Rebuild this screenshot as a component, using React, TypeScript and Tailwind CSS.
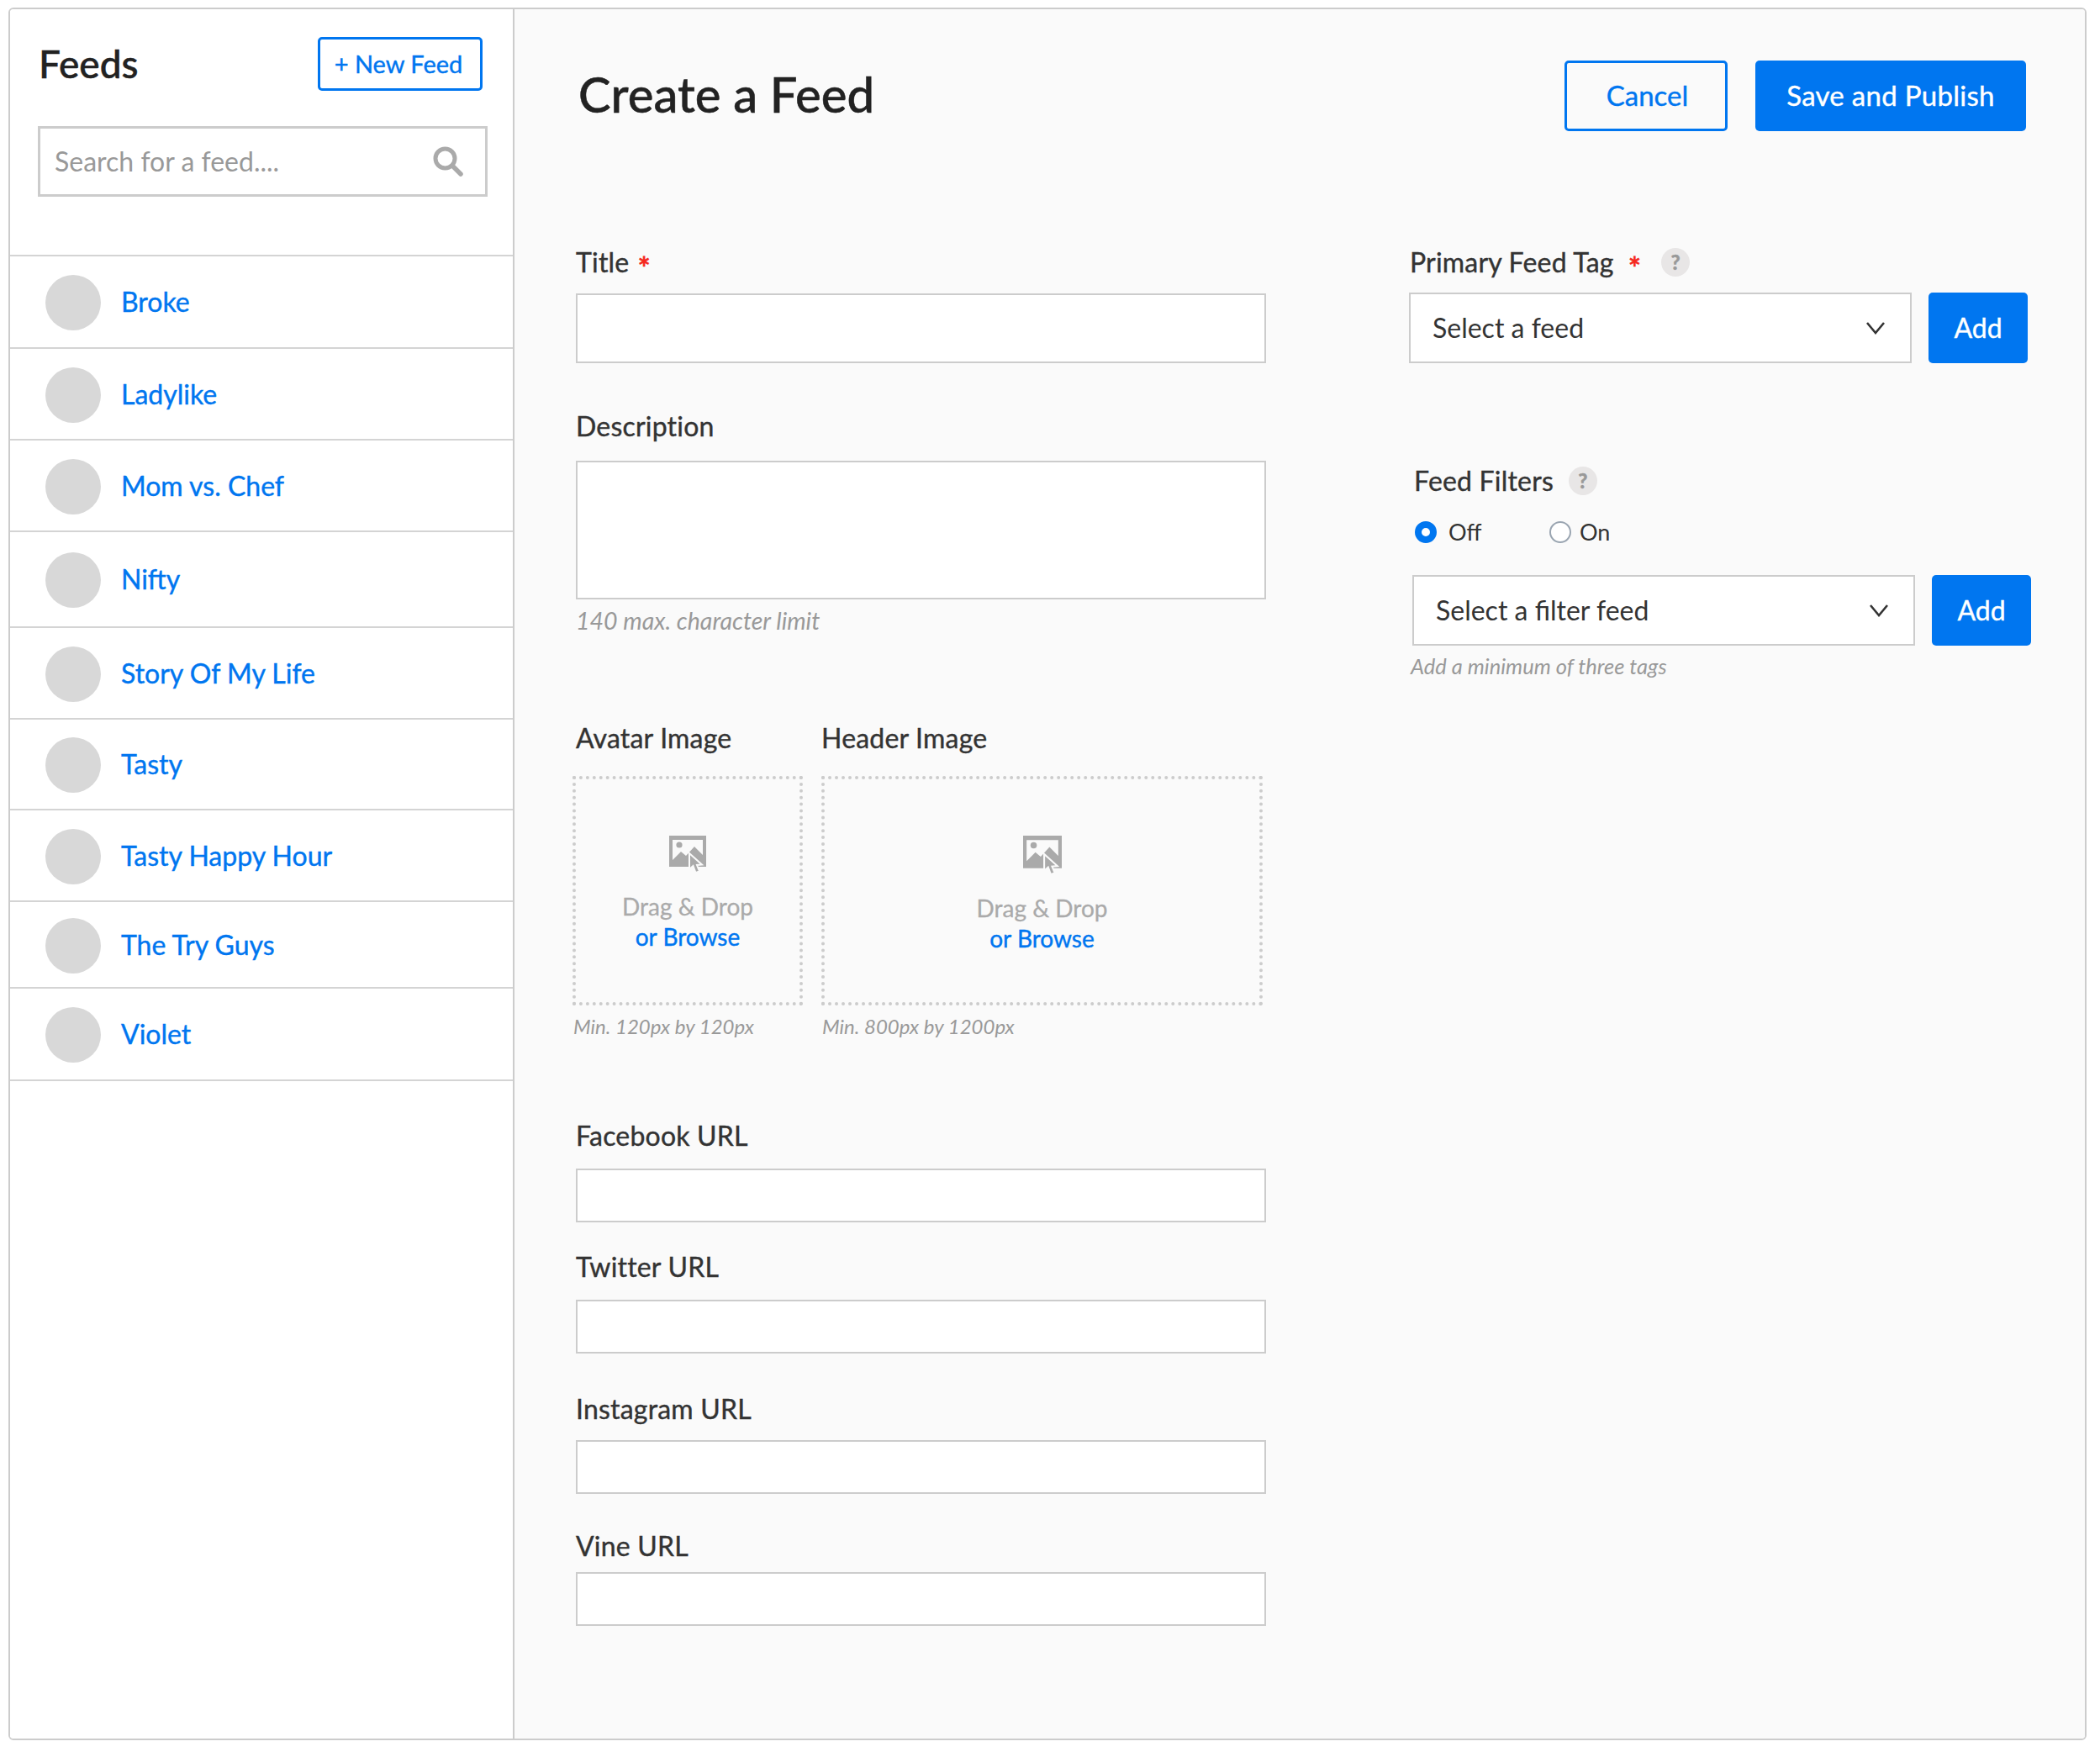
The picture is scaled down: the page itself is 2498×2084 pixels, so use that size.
import React from 'react';

const feeds = [
  { name: 'Broke', height: 'h-[110px]' },
  { name: 'Ladylike', height: 'h-[109px]' },
  { name: 'Mom vs. Chef', height: 'h-[109px]' },
  { name: 'Nifty', height: 'h-[114px]' },
  { name: 'Story Of My Life', height: 'h-[109px]' },
  { name: 'Tasty', height: 'h-[108px]' },
  { name: 'Tasty Happy Hour', height: 'h-[109px]' },
  { name: 'The Try Guys', height: 'h-[103px]' },
  { name: 'Violet', height: 'h-[110px]' },
];

function ImageIcon({ className }: { className: string }) {
  return (
    <svg viewBox="0 0 44 44" className={className}>
      <path fill="#aaa" fillRule="evenodd" d="M0 0h44v37H0zM4 5v24l10-10 6 5 10-11 10 10V5z" />
      <circle cx="12" cy="11" r="3.6" fill="#aaa" />
      <path fill="#aaa" stroke="#fafafa" strokeWidth="2" d="M24 21v19l4.500-4 3 8 4.500-1.500-3-7.500 6-.5z" />
    </svg>
  );
}

function Chevron() {
  return (
    <svg viewBox="0 0 22 15" className="h-[15px] w-[22px]" fill="none" stroke="#333" strokeWidth="2.6">
      <path d="M1 1l10 12L21 1" />
    </svg>
  );
}

function SearchIcon() {
  return (
    <svg viewBox="0 0 36 36" className="h-[36px] w-[36px]" fill="none" stroke="#aaa">
      <circle cx="14.5" cy="14.5" r="11.5" strokeWidth="5" />
      <path d="M23.5 23.5L33 33" strokeWidth="5.5" strokeLinecap="round" />
    </svg>
  );
}

function Help() {
  return (
    <span className="flex h-[34px] w-[34px] items-center justify-center rounded-full bg-[#e8e6e6] text-[24px] font-black text-[#999]">?</span>
  );
}

function Star({ className }: { className: string }) {
  return <span className={`h-[20px] text-[36px] font-bold leading-[32px] text-[#f5281e] ${className}`}>*</span>;
}

function Label({ children, className }: { children: React.ReactNode; className: string }) {
  return (
    <div className={`flex items-center text-[32px] leading-[40px] tracking-[0.2px] text-[#333] [-webkit-text-stroke:0.4px] ${className}`}>
      {children}
    </div>
  );
}

function Input({ className }: { className: string }) {
  return <div className={`w-[821px] border-2 border-[#ccc] bg-white ${className}`} />;
}

function DropZone({ width, iconClass, hint, gap }: { width: string; iconClass: string; hint: string; gap: string }) {
  return (
    <div className={gap}>
      <div className={`flex h-[273px] flex-col items-center border-4 border-dotted border-[#ccc] pt-[67px] ${width}`}>
        <ImageIcon className={iconClass} />
        <div className="mt-[22px] text-[28px] leading-[36px] text-[#aaa] [-webkit-text-stroke:0.3px]">Drag &amp; Drop</div>
        <div className="text-[28px] leading-[36px] text-[#0076f0] [-webkit-text-stroke:0.4px]">or Browse</div>
      </div>
      <div className="mt-[11px] pl-[1px] text-[24px] italic leading-[28px] text-[#999]">{hint}</div>
    </div>
  );
}

function SelectRow({ label, className }: { label: string; className: string }) {
  return (
    <div className={`flex gap-[20px] ${className}`}>
      <div className="flex h-[84px] w-[598px] items-center justify-between border-2 border-[#ccc] bg-white pl-[26px] pr-[30px] text-[32px] text-[#333]">
        {label}
        <Chevron />
      </div>
      <button className="h-[84px] w-[118px] rounded-[5px] bg-[#0076f0] text-[32px] text-white [-webkit-text-stroke:0.4px]">Add</button>
    </div>
  );
}

export default function App() {
  return (
    <div className="h-[2084px] w-[2498px] bg-white pl-[10px] pt-[9px] font-['Lato',sans-serif]">
      <div className="flex h-[2061px] w-[2472px] overflow-hidden rounded-[6px] border-2 border-[#ccc]">
        <aside className="w-[600px] shrink-0 border-r-2 border-[#ccc] bg-white">
          <div className="h-[294px] border-b-2 border-[#d4d4d4] pl-[33px] pr-[34px] pt-[33px]">
            <div className="flex items-center justify-between pl-[1px] pr-[2px]">
              <h1 className="text-[46px] font-medium leading-[64px] text-[#222] [-webkit-text-stroke:0.5px]">Feeds</h1>
              <button className="h-[64px] w-[196px] rounded-[5px] border-[3px] border-[#0076f0] pr-[4px] text-[29px] text-[#0076f0] [-webkit-text-stroke:0.4px]">+ New Feed</button>
            </div>
            <div className="mt-[42px] flex h-[84px] w-[535px] items-center justify-between border-[3px] border-[#ccc] pl-[17px] pr-[26px] text-[32px] text-[#999]">
              Search for a feed....
              <SearchIcon />
            </div>
          </div>
          {feeds.map((f) => (
            <div key={f.name} className={`flex items-center gap-[24px] border-b-2 border-[#d4d4d4] pl-[42px] ${f.height}`}>
              <div className="mt-[2px] h-[66px] w-[66px] rounded-full bg-[#d8d8d8]" />
              <a className="text-[32px] text-[#0076f0] [-webkit-text-stroke:0.4px]">{f.name}</a>
            </div>
          ))}
        </aside>

        <main className="min-w-0 flex-1 bg-[#fafafa] pl-[73px] pr-[70px]">
          <div className="flex items-start justify-between pt-[61px]">
            <h2 className="pl-[3px] pt-[8px] text-[58px] font-medium leading-[64px] text-[#222] [-webkit-text-stroke:0.5px]">Create a Feed</h2>
            <div className="flex gap-[33px]">
              <button className="h-[84px] w-[194px] rounded-[5px] border-[3px] border-[#0076f0] pl-[3px] text-[33px] text-[#0076f0] [-webkit-text-stroke:0.4px]">Cancel</button>
              <button className="h-[84px] w-[322px] rounded-[5px] bg-[#0076f0] text-[33px] tracking-[0.3px] text-white [-webkit-text-stroke:0.4px]">Save and Publish</button>
            </div>
          </div>

          <div className="flex">
            <div className="w-[992px] shrink-0 pt-[136px]">
              <Label className="">
                Title<Star className="ml-[10px]" />
              </Label>
              <Input className="mt-[17px] h-[83px]" />
              <Label className="mt-[55px]">Description</Label>
              <Input className="mt-[21px] h-[165px]" />
              <div className="mt-[9px] text-[28.5px] italic leading-[32px] text-[#999]">140 max. character limit</div>
              <div className="mt-[104px] flex">
                <Label className="w-[292px]">Avatar Image</Label>
                <Label className="">Header Image</Label>
              </div>
              <div className="mt-[25px] flex">
                <DropZone width="w-[274px]" iconClass="h-[44px] w-[44px]" hint="Min. 120px by 120px" gap="-ml-[4px]" />
                <DropZone width="w-[525px]" iconClass="h-[46px] w-[46px]" hint="Min. 800px by 1200px" gap="ml-[22px]" />
              </div>
              <Label className="mt-[96px]">Facebook URL</Label>
              <Input className="mt-[19px] h-[64px]" />
              <Label className="mt-[33px]">Twitter URL</Label>
              <Input className="mt-[19px] h-[64px]" />
              <Label className="mt-[46px]">Instagram URL</Label>
              <Input className="mt-[17px] h-[64px]" />
              <Label className="mt-[42px]">Vine URL</Label>
              <Input className="mt-[11px] h-[64px]" />
            </div>

            <div className="pt-[136px]">
              <Label className="">
                Primary Feed Tag<Star className="ml-[17px]" />
                <span className="ml-[24px]"><Help /></span>
              </Label>
              <SelectRow label="Select a feed" className="-ml-[1px] mt-[16px]" />
              <Label className="ml-[5px] mt-[120px]">
                Feed Filters<span className="ml-[18px]"><Help /></span>
              </Label>
              <div className="ml-[6px] mt-[27px] flex items-center text-[27px] leading-[28px] text-[#333]">
                <span className="h-[26px] w-[26px] rounded-full border-[8px] border-[#0076f0] bg-white" />
                <span className="ml-[14px] w-[120px]">Off</span>
                <span className="h-[26px] w-[26px] rounded-full border-2 border-[#9aa5b1] bg-white" />
                <span className="ml-[10px]">On</span>
              </div>
              <SelectRow label="Select a filter feed" className="ml-[3px] mt-[37px]" />
              <div className="ml-[1px] mt-[10px] text-[25.5px] italic leading-[28px] text-[#999]">Add a minimum of three tags</div>
            </div>
          </div>
        </main>
      </div>
    </div>
  );
}
